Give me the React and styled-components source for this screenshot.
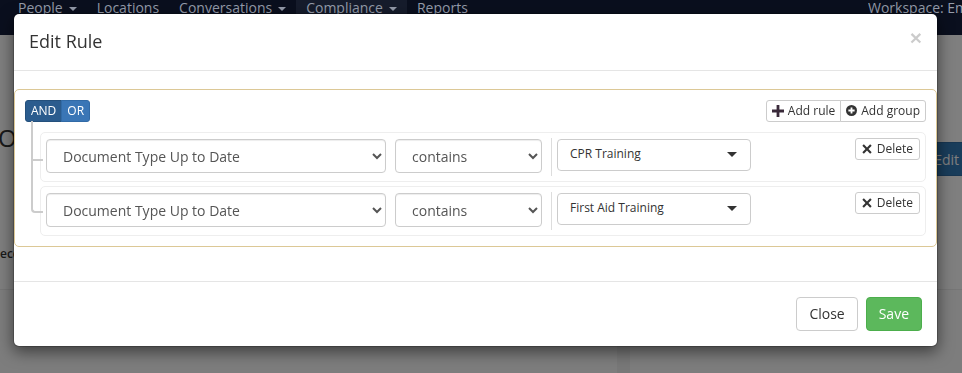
import React from 'react'
import styled, { createGlobalStyle } from 'styled-components'

const GlobalStyle = createGlobalStyle`
    html, body {
        margin: 0;
        padding: 0;
        width: 962px;
        height: 373px;
        overflow: hidden;
        background: #fff;
        font-family: "Open Sans", "Liberation Sans", sans-serif;
        color: #333;
    }
    * {
        box-sizing: border-box;
    }
`

const navItems = [
    { label: 'People', caret: true },
    { label: 'Locations' },
    { label: 'Conversations', caret: true },
    { label: 'Compliance', caret: true, active: true },
    { label: 'Reports' },
]

const rules = [
    { field: 'Document Type Up to Date', operator: 'contains', value: 'CPR Training' },
    { field: 'Document Type Up to Date', operator: 'contains', value: 'First Aid Training' },
]

function PlusIcon() {
    return (
        <Icon viewBox="0 0 12 12" width="12" height="12">
            <path d="M4.6 0h2.8v4.6H12v2.8H7.4V12H4.6V7.4H0V4.6h4.6z" fill="#3a2a3a" />
        </Icon>
    )
}

function PlusSignIcon() {
    return (
        <Icon viewBox="0 0 12 12" width="11" height="11">
            <circle cx="6" cy="6" r="6" fill="#333" />
            <path d="M5 2.6h2v2.4h2.4v2H7v2.4H5V7H2.6V5H5z" fill="#fff" />
        </Icon>
    )
}

function RemoveIcon() {
    return (
        <Icon viewBox="0 0 12 12" width="10" height="10">
            <path d="M2.2 0.4L6 4.2 9.8 0.4 11.6 2.2 7.8 6l3.8 3.8-1.8 1.8L6 7.8 2.2 11.6 0.4 9.8 4.2 6 0.4 2.2z" fill="#333" />
        </Icon>
    )
}

function App() {
    return (
        <>
            <GlobalStyle />
            <Navbar>
                <NavList>
                    {navItems.map((item) => (
                        <NavLink key={item.label} active={item.active}>
                            {item.label}
                            {item.caret && <Caret />}
                        </NavLink>
                    ))}
                </NavList>
                <Workspace>Workspace: Employer Services</Workspace>
            </Navbar>

            <Page>
                <TitleRow>
                    <PageTitle>ONBOARDING</PageTitle>
                    <PrimaryButton>Edit</PrimaryButton>
                </TitleRow>
                <Note>ecc</Note>
                <Panels>
                    <Panel />
                    <PanelGap />
                    <Panel grow />
                </Panels>
            </Page>

            <Backdrop />

            <ModalLayer>
                <Modal>
                    <ModalHeader>
                        <ModalTitle>Edit Rule</ModalTitle>
                        <CloseX>×</CloseX>
                    </ModalHeader>

                    <ModalBody>
                        <Group>
                            <GroupHeader>
                                <BtnGroup>
                                    <ConditionButton active>AND</ConditionButton>
                                    <ConditionButton>OR</ConditionButton>
                                </BtnGroup>
                                <BtnGroup>
                                    <XsButton><PlusIcon /> Add rule</XsButton>
                                    <XsButton><PlusSignIcon /> Add group</XsButton>
                                </BtnGroup>
                            </GroupHeader>

                            <RulesList>
                                {rules.map((rule, index) => (
                                    <RuleItem key={index}>
                                        <FieldSelect width={340} defaultValue={rule.field}>
                                            <option>{rule.field}</option>
                                        </FieldSelect>
                                        <FieldSelect width={147} defaultValue={rule.operator}>
                                            <option>{rule.operator}</option>
                                        </FieldSelect>
                                        <ValueContainer>
                                            <PickerButton>
                                                <span>{rule.value}</span>
                                                <PickerCaret />
                                            </PickerButton>
                                        </ValueContainer>
                                        <DeleteButton><RemoveIcon /> Delete</DeleteButton>
                                    </RuleItem>
                                ))}
                            </RulesList>
                        </Group>
                    </ModalBody>

                    <ModalFooter>
                        <FooterButton>Close</FooterButton>
                        <FooterButton success>Save</FooterButton>
                    </ModalFooter>
                </Modal>
            </ModalLayer>
        </>
    )
}

export default App

const Navbar = styled.div`
    position: relative;
    z-index: 1045;
    height: 35px;
    background: #0a0f1e;
    display: flex;
    align-items: flex-start;
    padding-left: 8px;
    overflow: hidden;
`

const NavList = styled.div`
    display: flex;
    flex: 1;
`

const NavLink = styled.a`
    display: flex;
    align-items: flex-start;
    height: 35px;
    padding: 0 10px;
    margin-top: -2px;
    font-size: 14px;
    line-height: 20px;
    color: #959cab;
    background: ${props => props.active ? '#161c2c' : 'transparent'};
    white-space: nowrap;
`

const Caret = styled.span`
    display: inline-block;
    width: 0;
    height: 0;
    margin: 9px 0 0 6px;
    border-top: 4px solid #959cab;
    border-left: 4px solid transparent;
    border-right: 4px solid transparent;
`

const Workspace = styled.div`
    width: 94px;
    margin-top: -2px;
    font-size: 14px;
    line-height: 20px;
    color: #959cab;
    white-space: nowrap;
    overflow: hidden;
`

const Page = styled.div`
    display: flex;
    flex-direction: column;
`

const TitleRow = styled.div`
    display: flex;
    justify-content: space-between;
    align-items: flex-start;
    padding-top: 88px;
    margin-right: -10px;
`

const PageTitle = styled.h3`
    margin: 0 0 0 -2px;
    font-size: 24px;
    line-height: 30px;
    font-weight: 400;
    color: #333;
`

const PrimaryButton = styled.button`
    margin-top: 19px;
    height: 34px;
    padding: 6px 12px;
    font-family: inherit;
    font-size: 14px;
    color: #fff;
    background: #337ab7;
    border: 1px solid #2e6da4;
    border-radius: 4px;
`

const Note = styled.div`
    margin-top: 69px;
    font-size: 12px;
    font-weight: 600;
    line-height: 17px;
    color: #333;
`

const Panels = styled.div`
    display: flex;
    margin-top: 27px;
    height: 90px;
    border-top: 1px solid #ececec;
`

const Panel = styled.div`
    width: ${props => props.grow ? 'auto' : '617px'};
    flex: ${props => props.grow ? 1 : 'none'};
    background: #fbfbfb;
`

const PanelGap = styled.div`
    width: 13px;
    background: #f1f1f1;
`

const Backdrop = styled.div`
    position: fixed;
    inset: 0;
    z-index: 1040;
    background: rgba(0, 0, 0, 0.5);
`

const ModalLayer = styled.div`
    position: fixed;
    inset: 0;
    z-index: 1050;
    padding: 13px 0 0 13px;
`

const Modal = styled.div`
    width: 925px;
    background: #fff;
    border: 1px solid rgba(0, 0, 0, 0.2);
    border-radius: 6px;
    box-shadow: 0 5px 15px rgba(0, 0, 0, 0.5);
    background-clip: padding-box;
`

const ModalHeader = styled.div`
    display: flex;
    justify-content: space-between;
    align-items: flex-start;
    padding: 15px;
    border-bottom: 1px solid #e5e5e5;
`

const ModalTitle = styled.h4`
    margin: 0;
    font-size: 18px;
    font-weight: 400;
    line-height: 1.42857;
    color: #333;
`

const CloseX = styled.button`
    margin-top: -2px;
    padding: 0;
    border: 0;
    background: transparent;
    font-family: "Liberation Sans", sans-serif;
    font-size: 21px;
    font-weight: 700;
    line-height: 1;
    color: #000;
    opacity: 0.2;
`

const ModalBody = styled.div`
    padding: 14px 0 30px;
`

const Group = styled.div`
    margin: 4px 0;
    padding: 10px 10px 6px;
    border: 1px solid #dcc896;
    border-radius: 5px;
    background: #fff;
`

const GroupHeader = styled.div`
    display: flex;
    justify-content: space-between;
    align-items: center;
    margin-bottom: 10px;
`

const BtnGroup = styled.div`
    display: flex;

    > * + * {
        margin-left: -1px;
    }

    > *:first-child {
        border-radius: 3px 0 0 3px;
    }

    > *:last-child {
        border-radius: 0 3px 3px 0;
    }
`

const ConditionButton = styled.button`
    height: 22px;
    padding: 1px 5px;
    font-family: inherit;
    font-size: 12px;
    line-height: 1.5;
    color: #fff;
    background: ${props => props.active ? '#2b5c8e' : '#3a76b6'};
    border: 1px solid ${props => props.active ? '#24507c' : '#316aa6'};
    border-radius: 0;
`

const XsButton = styled.button`
    display: flex;
    align-items: center;
    gap: 4px;
    height: 22px;
    padding: 1px 5px;
    font-family: inherit;
    font-size: 12px;
    line-height: 1.5;
    color: #333;
    background: #fff;
    border: 1px solid #ccc;
    border-radius: 0;
`

const Icon = styled.svg`
    display: block;
    flex: none;
`

const RulesList = styled.ul`
    list-style: none;
    margin: 0;
    padding: 0 0 0 15px;
`

const RuleItem = styled.li`
    position: relative;
    display: flex;
    align-items: flex-start;
    gap: 9px;
    height: 50px;
    margin: 4px 0;
    padding: 5px;
    border: 1px solid #eee;
    border-radius: 5px;
    background: rgba(255, 255, 255, 0.9);

    &::before,
    &::after {
        content: '';
        position: absolute;
        left: -10px;
        width: 10px;
        height: calc(50% + 4px);
        border-color: #ccc;
        border-style: solid;
    }

    &::before {
        top: -4px;
        border-width: 0 0 2px 2px;
    }

    &::after {
        top: 50%;
        border-width: 0 0 0 2px;
    }

    &:first-child::before {
        top: -12px;
        height: calc(50% + 14px);
    }

    &:last-child::before {
        border-radius: 0 0 0 4px;
    }

    &:last-child::after {
        display: none;
    }
`

const FieldSelect = styled.select`
    width: ${props => props.width}px;
    height: 34px;
    margin-top: 1px;
    padding: 6px 12px;
    font-family: inherit;
    font-size: 14px;
    color: #555;
    background: #fff;
    border: 1px solid #ccc;
    border-radius: 4px;
    box-shadow: inset 0 1px 1px rgba(0, 0, 0, 0.075);
`

const ValueContainer = styled.div`
    height: 38px;
    padding-left: 5px;
    border-left: 1px solid #ddd;
`

const PickerButton = styled.div`
    display: flex;
    justify-content: space-between;
    align-items: center;
    width: 194px;
    height: 32px;
    margin-top: 1px;
    padding: 0 13px 2px 12px;
    font-size: 12px;
    color: #333;
    background: #fff;
    border: 1px solid #ccc;
    border-radius: 4px;
`

const PickerCaret = styled.span`
    width: 0;
    height: 0;
    margin-top: 2px;
    border-top: 5px solid #333;
    border-left: 5px solid transparent;
    border-right: 5px solid transparent;
`

const DeleteButton = styled(XsButton)`
    margin-left: auto;
    border-radius: 3px;
    gap: 5px;
    padding: 1px 6px;
`

const ModalFooter = styled.div`
    display: flex;
    justify-content: flex-end;
    gap: 8px;
    padding: 15px;
    border-top: 1px solid #e5e5e5;
`

const FooterButton = styled.button`
    height: 34px;
    padding: 6px 12px;
    font-family: inherit;
    font-size: 14px;
    line-height: 1.42857;
    color: ${props => props.success ? '#fff' : '#333'};
    background: ${props => props.success ? '#5cb85c' : '#fff'};
    border: 1px solid ${props => props.success ? '#4cae4c' : '#ccc'};
    border-radius: 4px;
`
